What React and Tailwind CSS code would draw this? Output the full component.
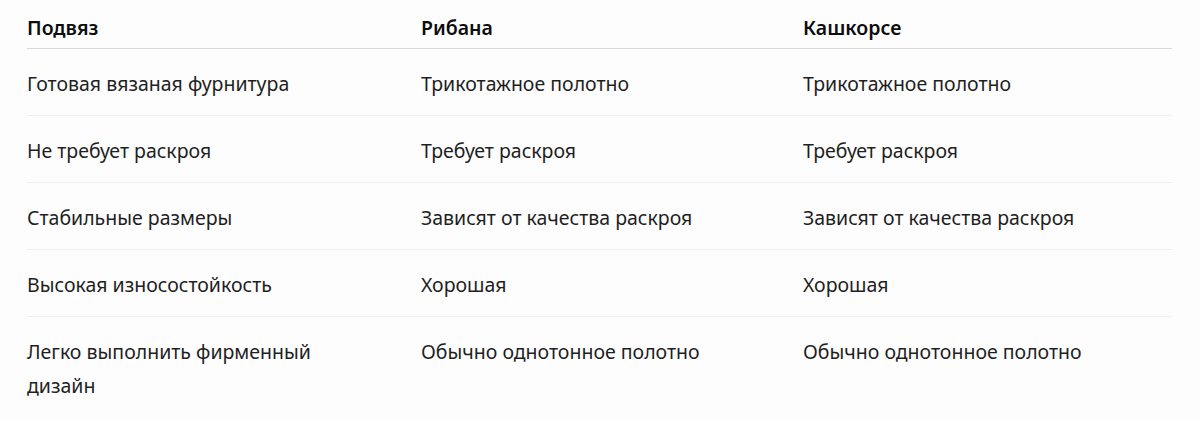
import React from "react";

const rows = [
  ["Готовая вязаная фурнитура", "Трикотажное полотно", "Трикотажное полотно"],
  ["Не требует раскроя", "Требует раскроя", "Требует раскроя"],
  ["Стабильные размеры", "Зависят от качества раскроя", "Зависят от качества раскроя"],
  ["Высокая износостойкость", "Хорошая", "Хорошая"],
  ["Легко выполнить фирменный дизайн", "Обычно однотонное полотно", "Обычно однотонное полотно"],
];

const App = () => {
  return (
    <div className="min-h-[422px] bg-[#fdfdfd] pl-[27px] pt-[11px] font-['Segoe_UI','Noto_Sans',sans-serif] text-[19.5px] leading-[34px] text-[#1f1f1f]">
      <table className="w-[1145px] table-fixed border-collapse text-left">
        <colgroup>
          <col className="w-[394px]" />
          <col className="w-[382px]" />
          <col />
        </colgroup>
        <thead>
          <tr className="border-b border-[#d9d9d9]">
            <th className="pb-[3px] pr-6 font-semibold text-[#0d0d0d]">Подвяз</th>
            <th className="pb-[3px] pr-6 font-semibold text-[#0d0d0d]">Рибана</th>
            <th className="pb-[3px] pr-6 font-semibold text-[#0d0d0d]">Кашкорсе</th>
          </tr>
        </thead>
        <tbody>
          {rows.map((r, i) => (
            <tr key={i} className={i < rows.length - 1 ? "border-b border-[#efefef]" : ""}>
              {r.map((c, j) => (
                <td key={j} className={j === 0 ? "pt-[18px] pb-[14px] pr-[60px] align-top" : "pt-[18px] pb-[14px] pr-6 align-top"}>
                  {c}
                </td>
              ))}
            </tr>
          ))}
        </tbody>
      </table>
    </div>
  );
};

export default App;
